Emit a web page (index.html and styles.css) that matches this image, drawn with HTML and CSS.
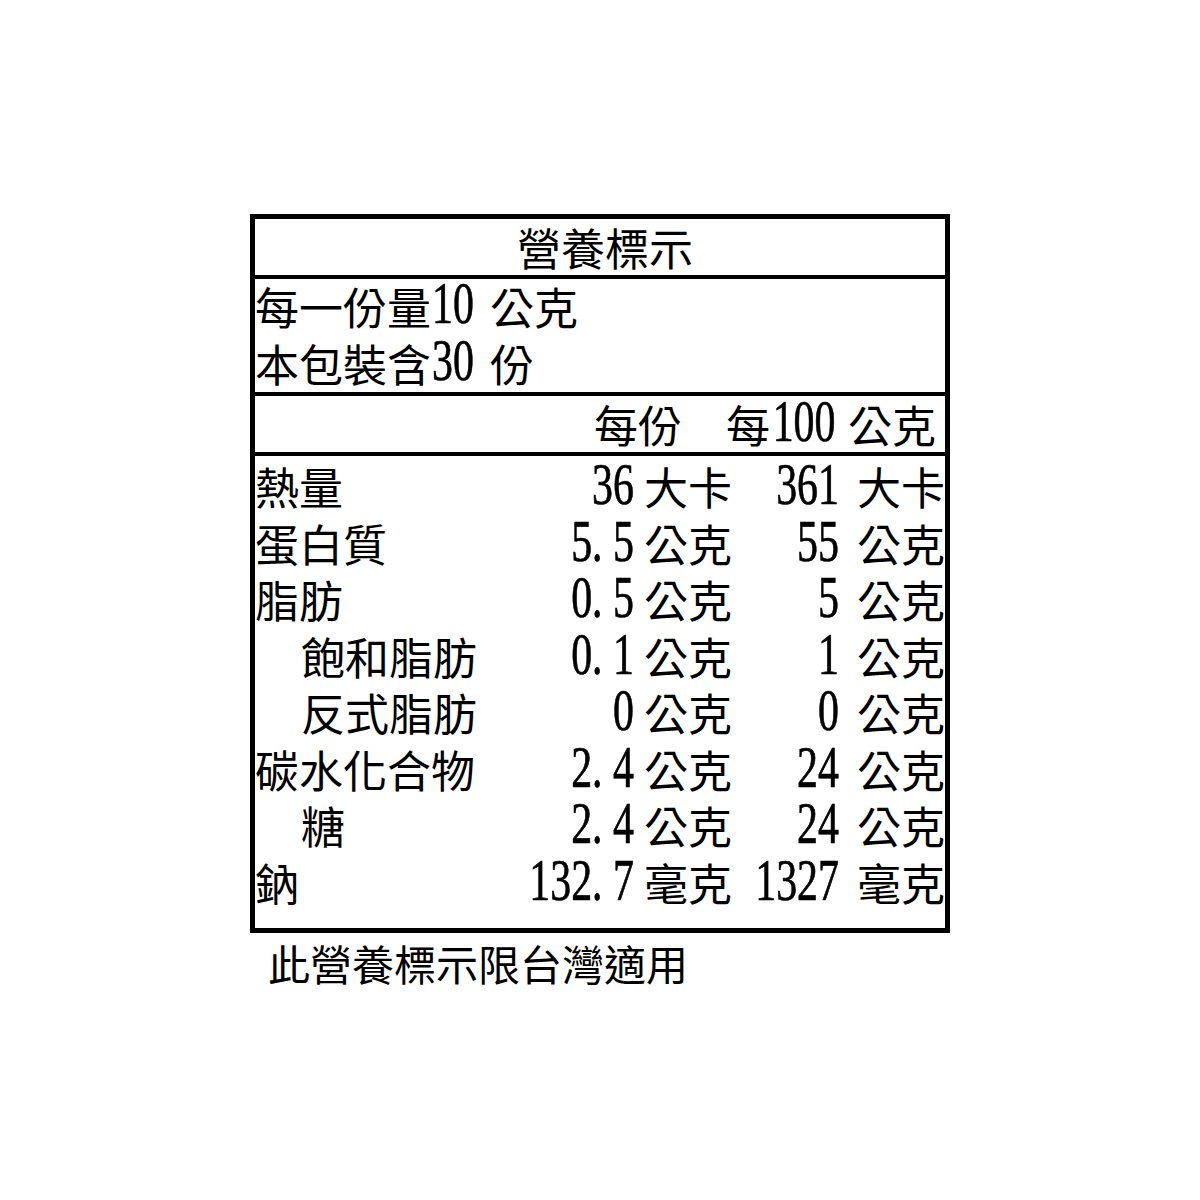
FILE: index.html
```html
<!DOCTYPE html>
<html lang="zh-Hant">
<head>
<meta charset="utf-8">
<title>營養標示</title>
<link rel="stylesheet" href="styles.css">
</head>
<body>
<div class="page">
  <div class="label">
    <div class="title">營養標示</div>
    <div class="serving">
      <div class="line">每一份量<span class="dg w2">10</span><span class="unit">公克</span></div>
      <div class="line">本包裝含<span class="dg w2">30</span><span class="unit">份</span></div>
    </div>
    <div class="head">
      <span>每份</span><span class="h2">每</span><span class="dg w3">100</span><span class="hu">公克</span>
    </div>
    <div class="data">
      <div class="lab">熱量</div><div class="n">36</div><div class="u1">大卡</div><div class="n">361</div><div class="u2">大卡</div>
      <div class="lab">蛋白質</div><div class="n">5<span class="pt">.</span>5</div><div class="u1">公克</div><div class="n">55</div><div class="u2">公克</div>
      <div class="lab">脂肪</div><div class="n">0<span class="pt">.</span>5</div><div class="u1">公克</div><div class="n">5</div><div class="u2">公克</div>
      <div class="lab sub">飽和脂肪</div><div class="n">0<span class="pt">.</span>1</div><div class="u1">公克</div><div class="n">1</div><div class="u2">公克</div>
      <div class="lab sub">反式脂肪</div><div class="n">0</div><div class="u1">公克</div><div class="n">0</div><div class="u2">公克</div>
      <div class="lab">碳水化合物</div><div class="n">2<span class="pt">.</span>4</div><div class="u1">公克</div><div class="n">24</div><div class="u2">公克</div>
      <div class="lab sub">糖</div><div class="n">2<span class="pt">.</span>4</div><div class="u1">公克</div><div class="n">24</div><div class="u2">公克</div>
      <div class="lab">鈉</div><div class="n">132<span class="pt">.</span>7</div><div class="u1">毫克</div><div class="n">1327</div><div class="u2">毫克</div>
    </div>
  </div>
  <div class="note">此營養標示限台灣適用</div>
</div>
</body>
</html>
```
FILE: styles.css
```css
body {
  margin: 0;
  background: #fff;
  color: #000;
  font-family: "Noto Sans CJK TC", "Noto Sans CJK SC", sans-serif;
}

.page {
  padding: 214px 0 0 250px;
}

.label {
  width: 700px;
  box-sizing: border-box;
  border: 5px solid #000;
  font-size: 44px;
}

.title {
  height: 56px;
  line-height: 56px;
  text-align: center;
  padding-left: 10px;
  border-bottom: 4px solid #000;
  white-space: nowrap;
}

.serving {
  height: 114px;
  border-bottom: 4px solid #000;
}

.line {
  line-height: 57px;
  height: 57px;
  margin-top: -1px;
  margin-bottom: 1px;
  white-space: nowrap;
}

.dg {
  display: inline-block;
  font-family: "Liberation Serif", serif;
  font-size: 59px;
  line-height: 40px;
  -webkit-text-stroke: 0.7px #000;
  transform: scaleX(0.71) translateY(-2px);
  transform-origin: right center;
}

.line .w2 {
  margin-left: -16px;
}

.unit {
  margin-left: 16px;
}

.head {
  height: 56px;
  line-height: 56px;
  border-bottom: 4px solid #000;
  display: flex;
  justify-content: flex-end;
  align-items: baseline;
  padding-right: 9px;
  white-space: nowrap;
}

.h2 {
  margin-left: 44px;
}

.head .w3 {
  margin-left: -23.5px;
}

.hu {
  margin-left: 13px;
}

.data {
  display: grid;
  grid-template-columns: 265px 114px 99px 106px 106px;
  grid-auto-rows: 56.5px;
  line-height: 56.5px;
  padding: 2px 0 18px;
}

.lab {
  white-space: nowrap;
}

.sub {
  padding-left: 46px;
}

.n {
  display: flex;
  justify-content: flex-end;
  font-family: "Liberation Serif", serif;
  font-size: 59px;
  line-height: 56.5px;
  white-space: nowrap;
  -webkit-text-stroke: 0.7px #000;
  transform: scaleX(0.71) translateY(-2px);
  transform-origin: right center;
}

.pt {
  padding-right: 0.25em;
}

.u1 {
  padding-left: 10px;
  white-space: nowrap;
}

.u2 {
  padding-left: 18px;
  white-space: nowrap;
}

.note {
  font-size: 42px;
  line-height: 50px;
  margin-top: 5px;
  padding-left: 18px;
  white-space: nowrap;
}
```
